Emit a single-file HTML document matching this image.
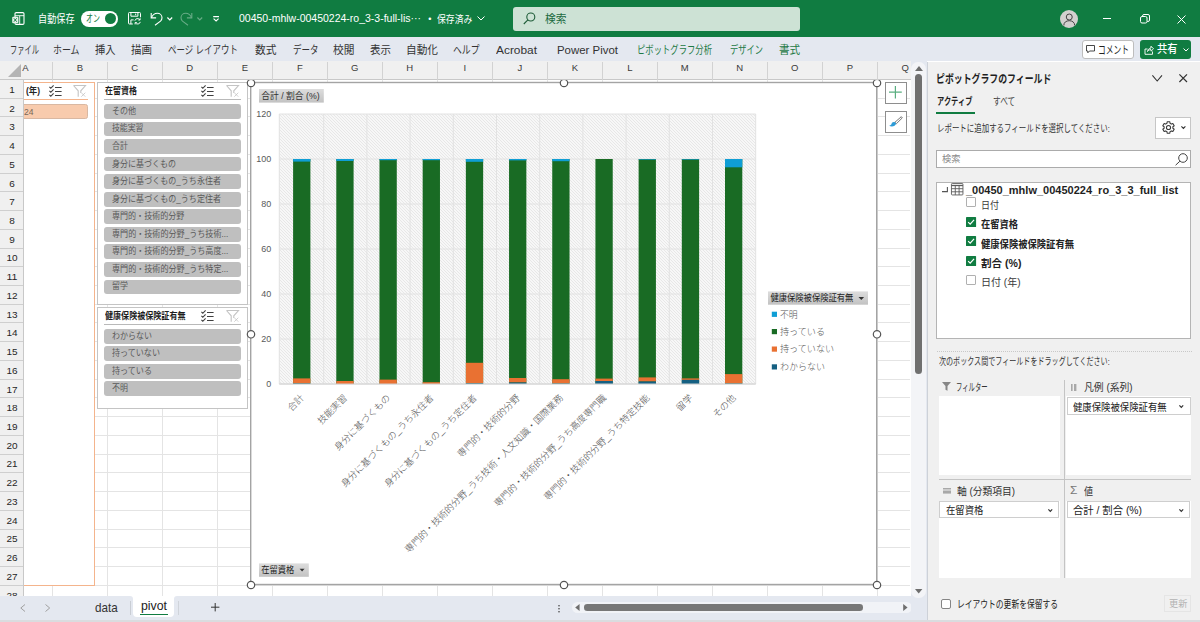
<!DOCTYPE html><html lang="ja"><head><meta charset="utf-8"><title>00450-mhlw-00450224-ro_3-3-full-list - Excel</title><style>
*{box-sizing:border-box;margin:0;padding:0}
html,body{width:1200px;height:622px;overflow:hidden;background:#fff}
body{font-family:"Liberation Sans", "Noto Sans CJK JP", sans-serif;}
#app{position:relative;width:1200px;height:622px;overflow:hidden;background:#fff}
.t{position:absolute;white-space:nowrap;display:inline-block}
.abs{position:absolute}
svg{position:absolute;overflow:visible}
</style></head><body><div id="app"><div class="abs" style="left:51.5px;top:80px;width:1px;height:516px;background:#e4e4e4"></div><div class="abs" style="left:106.5px;top:80px;width:1px;height:516px;background:#e4e4e4"></div><div class="abs" style="left:161.5px;top:80px;width:1px;height:516px;background:#e4e4e4"></div><div class="abs" style="left:216.5px;top:80px;width:1px;height:516px;background:#e4e4e4"></div><div class="abs" style="left:271.5px;top:80px;width:1px;height:516px;background:#e4e4e4"></div><div class="abs" style="left:326.5px;top:80px;width:1px;height:516px;background:#e4e4e4"></div><div class="abs" style="left:381.5px;top:80px;width:1px;height:516px;background:#e4e4e4"></div><div class="abs" style="left:436.5px;top:80px;width:1px;height:516px;background:#e4e4e4"></div><div class="abs" style="left:491.5px;top:80px;width:1px;height:516px;background:#e4e4e4"></div><div class="abs" style="left:546.5px;top:80px;width:1px;height:516px;background:#e4e4e4"></div><div class="abs" style="left:601.5px;top:80px;width:1px;height:516px;background:#e4e4e4"></div><div class="abs" style="left:656.5px;top:80px;width:1px;height:516px;background:#e4e4e4"></div><div class="abs" style="left:711.5px;top:80px;width:1px;height:516px;background:#e4e4e4"></div><div class="abs" style="left:766.5px;top:80px;width:1px;height:516px;background:#e4e4e4"></div><div class="abs" style="left:821.5px;top:80px;width:1px;height:516px;background:#e4e4e4"></div><div class="abs" style="left:876.5px;top:80px;width:1px;height:516px;background:#e4e4e4"></div><div class="abs" style="left:24px;top:97.73px;width:886px;height:1px;background:#e4e4e4"></div><div class="abs" style="left:24px;top:116.46px;width:886px;height:1px;background:#e4e4e4"></div><div class="abs" style="left:24px;top:135.19px;width:886px;height:1px;background:#e4e4e4"></div><div class="abs" style="left:24px;top:153.92px;width:886px;height:1px;background:#e4e4e4"></div><div class="abs" style="left:24px;top:172.65px;width:886px;height:1px;background:#e4e4e4"></div><div class="abs" style="left:24px;top:191.38px;width:886px;height:1px;background:#e4e4e4"></div><div class="abs" style="left:24px;top:210.11px;width:886px;height:1px;background:#e4e4e4"></div><div class="abs" style="left:24px;top:228.84px;width:886px;height:1px;background:#e4e4e4"></div><div class="abs" style="left:24px;top:247.57px;width:886px;height:1px;background:#e4e4e4"></div><div class="abs" style="left:24px;top:266.30px;width:886px;height:1px;background:#e4e4e4"></div><div class="abs" style="left:24px;top:285.03px;width:886px;height:1px;background:#e4e4e4"></div><div class="abs" style="left:24px;top:303.76px;width:886px;height:1px;background:#e4e4e4"></div><div class="abs" style="left:24px;top:322.49px;width:886px;height:1px;background:#e4e4e4"></div><div class="abs" style="left:24px;top:341.22px;width:886px;height:1px;background:#e4e4e4"></div><div class="abs" style="left:24px;top:359.95px;width:886px;height:1px;background:#e4e4e4"></div><div class="abs" style="left:24px;top:378.68px;width:886px;height:1px;background:#e4e4e4"></div><div class="abs" style="left:24px;top:397.41px;width:886px;height:1px;background:#e4e4e4"></div><div class="abs" style="left:24px;top:416.14px;width:886px;height:1px;background:#e4e4e4"></div><div class="abs" style="left:24px;top:434.87px;width:886px;height:1px;background:#e4e4e4"></div><div class="abs" style="left:24px;top:453.60px;width:886px;height:1px;background:#e4e4e4"></div><div class="abs" style="left:24px;top:472.33px;width:886px;height:1px;background:#e4e4e4"></div><div class="abs" style="left:24px;top:491.06px;width:886px;height:1px;background:#e4e4e4"></div><div class="abs" style="left:24px;top:509.79px;width:886px;height:1px;background:#e4e4e4"></div><div class="abs" style="left:24px;top:528.52px;width:886px;height:1px;background:#e4e4e4"></div><div class="abs" style="left:24px;top:547.25px;width:886px;height:1px;background:#e4e4e4"></div><div class="abs" style="left:24px;top:565.98px;width:886px;height:1px;background:#e4e4e4"></div><div class="abs" style="left:24px;top:584.71px;width:886px;height:1px;background:#e4e4e4"></div><div class="abs" style="left:-20px;top:82px;width:115px;height:503.500px;background:#fff;border:1px solid #f4b48c"></div><span class="t" style="left:26px;top:83.80px;font-size:9.5px;line-height:14px;color:#262626;font-weight:700;transform:scaleX(0.8845);transform-origin:left center;">(年)</span><svg style="left:48.5px;top:85px" width="13" height="12" viewBox="0 0 13 12" fill="none" stroke="#404040" stroke-width="1.1"><path d="M0.400 1.900L1.800 3.300L4.600 0.300M0.400 5.900L1.800 7.300L4.600 4.300M0.400 9.900L1.800 11.300L4.600 8.300M6 2.500H12.600M6 6.500H12.600M6 10.500H12.600"/></svg><svg style="left:73px;top:85px" width="13" height="12.500" viewBox="0 0 13 12.500" fill="none" stroke="#c4c4c4" stroke-width="1.1"><path d="M0.500 0.500H12.500L7.800 5.800V8M5.200 11.800V5.800L0.500 0.500"/><path d="M8.300 7.700L12.300 11.700M12.300 7.700L8.300 11.700" stroke-width="0.8"/></svg><div class="abs" style="left:20px;top:99px;width:68px;height:1px;background:#f4b48c"></div><div class="abs" style="left:14px;top:104px;width:74px;height:14.800px;background:#f8cbad;border:1px solid #d9b8a2;border-radius:2.500px"></div><span class="t" style="left:24px;top:104.50px;font-size:9px;line-height:14px;color:#7a6858;transform:scaleX(0.9485);transform-origin:left center;">24</span><div class="abs" style="left:97px;top:82px;width:151px;height:222.500px;background:#fff;border:1px solid #c4c4c4"></div><span class="t" style="left:104.5px;top:83.80px;font-size:9.5px;line-height:14px;color:#1e1e1e;font-weight:700;transform:scaleX(0.8418);transform-origin:left center;">在留資格</span><svg style="left:201px;top:85px" width="13" height="12" viewBox="0 0 13 12" fill="none" stroke="#404040" stroke-width="1.1"><path d="M0.400 1.900L1.800 3.300L4.600 0.300M0.400 5.900L1.800 7.300L4.600 4.300M0.400 9.900L1.800 11.300L4.600 8.300M6 2.500H12.600M6 6.500H12.600M6 10.500H12.600"/></svg><svg style="left:225.5px;top:85px" width="13" height="12.500" viewBox="0 0 13 12.500" fill="none" stroke="#c4c4c4" stroke-width="1.1"><path d="M0.500 0.500H12.500L7.800 5.800V8M5.200 11.800V5.800L0.500 0.500"/><path d="M8.300 7.700L12.300 11.700M12.300 7.700L8.300 11.700" stroke-width="0.8"/></svg><div class="abs" style="left:104px;top:98.600px;width:137px;height:1px;background:#b9b9b9"></div><div class="abs" style="left:104px;top:104.00px;width:137px;height:14.800px;background:#bfbfbf;border-radius:3px"></div><span class="t" style="left:111.7px;top:104.90px;font-size:8.6px;line-height:13px;color:#595959;transform:scaleX(0.9381);transform-origin:left center;">その他</span><div class="abs" style="left:104px;top:121.55px;width:137px;height:14.800px;background:#bfbfbf;border-radius:3px"></div><span class="t" style="left:111.7px;top:122.45px;font-size:8.6px;line-height:13px;color:#595959;transform:scaleX(0.9159);transform-origin:left center;">技能実習</span><div class="abs" style="left:104px;top:139.10px;width:137px;height:14.800px;background:#bfbfbf;border-radius:3px"></div><span class="t" style="left:111.7px;top:140.00px;font-size:8.6px;line-height:13px;color:#595959;transform:scaleX(0.9243);transform-origin:left center;">合計</span><div class="abs" style="left:104px;top:156.65px;width:137px;height:14.800px;background:#bfbfbf;border-radius:3px"></div><span class="t" style="left:111.7px;top:157.55px;font-size:8.6px;line-height:13px;color:#595959;transform:scaleX(0.9307);transform-origin:left center;">身分に基づくもの</span><div class="abs" style="left:104px;top:174.20px;width:137px;height:14.800px;background:#bfbfbf;border-radius:3px"></div><span class="t" style="left:111.7px;top:175.10px;font-size:8.6px;line-height:13px;color:#595959;transform:scaleX(0.9356);transform-origin:left center;">身分に基づくもの_うち永住者</span><div class="abs" style="left:104px;top:191.75px;width:137px;height:14.800px;background:#bfbfbf;border-radius:3px"></div><span class="t" style="left:111.7px;top:192.65px;font-size:8.6px;line-height:13px;color:#595959;transform:scaleX(0.9356);transform-origin:left center;">身分に基づくもの_うち定住者</span><div class="abs" style="left:104px;top:209.30px;width:137px;height:14.800px;background:#bfbfbf;border-radius:3px"></div><span class="t" style="left:111.7px;top:210.20px;font-size:8.6px;line-height:13px;color:#595959;transform:scaleX(0.9346);transform-origin:left center;">専門的・技術的分野</span><div class="abs" style="left:104px;top:226.85px;width:137px;height:14.800px;background:#bfbfbf;border-radius:3px"></div><span class="t" style="left:111.7px;top:227.75px;font-size:8.6px;line-height:13px;color:#595959;transform:scaleX(0.9396);transform-origin:left center;">専門的・技術的分野_うち技術...</span><div class="abs" style="left:104px;top:244.40px;width:137px;height:14.800px;background:#bfbfbf;border-radius:3px"></div><span class="t" style="left:111.7px;top:245.30px;font-size:8.6px;line-height:13px;color:#595959;transform:scaleX(0.9396);transform-origin:left center;">専門的・技術的分野_うち高度...</span><div class="abs" style="left:104px;top:261.95px;width:137px;height:14.800px;background:#bfbfbf;border-radius:3px"></div><span class="t" style="left:111.7px;top:262.85px;font-size:8.6px;line-height:13px;color:#595959;transform:scaleX(0.9396);transform-origin:left center;">専門的・技術的分野_うち特定...</span><div class="abs" style="left:104px;top:279.50px;width:137px;height:14.800px;background:#bfbfbf;border-radius:3px"></div><span class="t" style="left:111.7px;top:280.40px;font-size:8.6px;line-height:13px;color:#595959;transform:scaleX(0.9243);transform-origin:left center;">留学</span><div class="abs" style="left:97px;top:307px;width:151px;height:102px;background:#fff;border:1px solid #c4c4c4"></div><span class="t" style="left:104.5px;top:308.50px;font-size:9.5px;line-height:14px;color:#1e1e1e;font-weight:700;transform:scaleX(0.8472);transform-origin:left center;">健康保険被保険証有無</span><svg style="left:201px;top:309.7px" width="13" height="12" viewBox="0 0 13 12" fill="none" stroke="#404040" stroke-width="1.1"><path d="M0.400 1.900L1.800 3.300L4.600 0.300M0.400 5.900L1.800 7.300L4.600 4.300M0.400 9.900L1.800 11.300L4.600 8.300M6 2.500H12.600M6 6.500H12.600M6 10.500H12.600"/></svg><svg style="left:225.5px;top:309.7px" width="13" height="12.500" viewBox="0 0 13 12.500" fill="none" stroke="#c4c4c4" stroke-width="1.1"><path d="M0.500 0.500H12.500L7.800 5.800V8M5.200 11.800V5.800L0.500 0.500"/><path d="M8.300 7.700L12.300 11.700M12.300 7.700L8.300 11.700" stroke-width="0.8"/></svg><div class="abs" style="left:104px;top:323.500px;width:137px;height:1px;background:#b9b9b9"></div><div class="abs" style="left:104px;top:329.00px;width:137px;height:14.800px;background:#bfbfbf;border-radius:3px"></div><span class="t" style="left:111.7px;top:329.90px;font-size:8.6px;line-height:13px;color:#595959;transform:scaleX(0.9306);transform-origin:left center;">わからない</span><div class="abs" style="left:104px;top:346.45px;width:137px;height:14.800px;background:#bfbfbf;border-radius:3px"></div><span class="t" style="left:111.7px;top:347.35px;font-size:8.6px;line-height:13px;color:#595959;transform:scaleX(0.9386);transform-origin:left center;">持っていない</span><div class="abs" style="left:104px;top:363.90px;width:137px;height:14.800px;background:#bfbfbf;border-radius:3px"></div><span class="t" style="left:111.7px;top:364.80px;font-size:8.6px;line-height:13px;color:#595959;transform:scaleX(0.9401);transform-origin:left center;">持っている</span><div class="abs" style="left:104px;top:381.35px;width:137px;height:14.800px;background:#bfbfbf;border-radius:3px"></div><span class="t" style="left:111.7px;top:382.25px;font-size:8.6px;line-height:13px;color:#595959;transform:scaleX(0.9243);transform-origin:left center;">不明</span><svg style="left:0;top:0" width="1200" height="622" viewBox="0 0 1200 622"><defs><pattern id="hatch" width="3" height="3" patternUnits="userSpaceOnUse"><rect width="3" height="3" fill="#f7f7f7"/><path d="M0 0h1v1h-1zM1 1h1v1h-1zM2 2h1v1h-1z" fill="#e7e7e7"/></pattern><linearGradient id="btn" x1="0" y1="0" x2="0" y2="1"><stop offset="0" stop-color="#dddddd"/><stop offset="1" stop-color="#c2c2c2"/></linearGradient></defs><rect x="250.700" y="82.500" width="626" height="502" fill="#fff" stroke="#a4a4a4" stroke-width="1.400"/><rect x="279.3" y="114.0" width="476.4" height="270.0" fill="url(#hatch)"/><line x1="279.30" y1="114.0" x2="279.30" y2="384.0" stroke="#e2e2e2" stroke-width="1"/><line x1="323.70" y1="114.0" x2="323.70" y2="384.0" stroke="#e2e2e2" stroke-width="1"/><line x1="366.90" y1="114.0" x2="366.90" y2="384.0" stroke="#e2e2e2" stroke-width="1"/><line x1="410.10" y1="114.0" x2="410.10" y2="384.0" stroke="#e2e2e2" stroke-width="1"/><line x1="453.30" y1="114.0" x2="453.30" y2="384.0" stroke="#e2e2e2" stroke-width="1"/><line x1="496.50" y1="114.0" x2="496.50" y2="384.0" stroke="#e2e2e2" stroke-width="1"/><line x1="539.70" y1="114.0" x2="539.70" y2="384.0" stroke="#e2e2e2" stroke-width="1"/><line x1="582.90" y1="114.0" x2="582.90" y2="384.0" stroke="#e2e2e2" stroke-width="1"/><line x1="626.10" y1="114.0" x2="626.10" y2="384.0" stroke="#e2e2e2" stroke-width="1"/><line x1="669.30" y1="114.0" x2="669.30" y2="384.0" stroke="#e2e2e2" stroke-width="1"/><line x1="712.50" y1="114.0" x2="712.50" y2="384.0" stroke="#e2e2e2" stroke-width="1"/><line x1="755.70" y1="114.0" x2="755.70" y2="384.0" stroke="#e2e2e2" stroke-width="1"/><line x1="279.3" y1="384.00" x2="755.7" y2="384.00" stroke="#e2e2e2" stroke-width="1"/><text x="271.300" y="387.20" text-anchor="end" font-size="9" fill="#595959">0</text><line x1="279.3" y1="339.00" x2="755.7" y2="339.00" stroke="#e2e2e2" stroke-width="1"/><text x="271.300" y="342.20" text-anchor="end" font-size="9" fill="#595959">20</text><line x1="279.3" y1="294.00" x2="755.7" y2="294.00" stroke="#e2e2e2" stroke-width="1"/><text x="271.300" y="297.20" text-anchor="end" font-size="9" fill="#595959">40</text><line x1="279.3" y1="249.00" x2="755.7" y2="249.00" stroke="#e2e2e2" stroke-width="1"/><text x="271.300" y="252.20" text-anchor="end" font-size="9" fill="#595959">60</text><line x1="279.3" y1="204.00" x2="755.7" y2="204.00" stroke="#e2e2e2" stroke-width="1"/><text x="271.300" y="207.20" text-anchor="end" font-size="9" fill="#595959">80</text><line x1="279.3" y1="159.00" x2="755.7" y2="159.00" stroke="#e2e2e2" stroke-width="1"/><text x="271.300" y="162.20" text-anchor="end" font-size="9" fill="#595959">100</text><line x1="279.3" y1="114.00" x2="755.7" y2="114.00" stroke="#e2e2e2" stroke-width="1"/><text x="271.300" y="117.20" text-anchor="end" font-size="9" fill="#595959">120</text><rect x="293.10" y="159.00" width="17.3" height="225.00" fill="#196b24"/><rect x="293.10" y="159.00" width="17.3" height="2.6" fill="#0f9ed5"/><rect x="293.10" y="378.40" width="17.3" height="5.0" fill="#e97132"/><rect x="293.10" y="383.40" width="17.3" height="0.6" fill="#156082"/><rect x="336.29" y="159.00" width="17.3" height="225.00" fill="#196b24"/><rect x="336.29" y="159.00" width="17.3" height="2.0" fill="#0f9ed5"/><rect x="336.29" y="381.00" width="17.3" height="3.0" fill="#e97132"/><rect x="379.48" y="159.00" width="17.3" height="225.00" fill="#196b24"/><rect x="379.48" y="159.00" width="17.3" height="1.2" fill="#0f9ed5"/><rect x="379.48" y="379.60" width="17.3" height="4.4" fill="#e97132"/><rect x="422.67" y="159.00" width="17.3" height="225.00" fill="#196b24"/><rect x="422.67" y="159.00" width="17.3" height="1.2" fill="#0f9ed5"/><rect x="422.67" y="382.20" width="17.3" height="1.8" fill="#e97132"/><rect x="465.86" y="159.00" width="17.3" height="225.00" fill="#196b24"/><rect x="465.86" y="159.00" width="17.3" height="2.8" fill="#0f9ed5"/><rect x="465.86" y="362.80" width="17.3" height="20.4" fill="#e97132"/><rect x="465.86" y="383.20" width="17.3" height="0.8" fill="#156082"/><rect x="509.05" y="159.00" width="17.3" height="225.00" fill="#196b24"/><rect x="509.05" y="159.00" width="17.3" height="1.4" fill="#0f9ed5"/><rect x="509.05" y="378.00" width="17.3" height="4.5" fill="#e97132"/><rect x="509.05" y="382.50" width="17.3" height="1.5" fill="#156082"/><rect x="552.24" y="159.00" width="17.3" height="225.00" fill="#196b24"/><rect x="552.24" y="159.00" width="17.3" height="2.2" fill="#0f9ed5"/><rect x="552.24" y="379.20" width="17.3" height="4.3" fill="#e97132"/><rect x="552.24" y="383.50" width="17.3" height="0.5" fill="#156082"/><rect x="595.43" y="159.00" width="17.3" height="225.00" fill="#196b24"/><rect x="595.43" y="378.60" width="17.3" height="2.4" fill="#e97132"/><rect x="595.43" y="381.00" width="17.3" height="3.0" fill="#156082"/><rect x="638.62" y="159.00" width="17.3" height="225.00" fill="#196b24"/><rect x="638.62" y="159.00" width="17.3" height="0.6" fill="#0f9ed5"/><rect x="638.62" y="377.40" width="17.3" height="4.1" fill="#e97132"/><rect x="638.62" y="381.50" width="17.3" height="2.5" fill="#156082"/><rect x="681.81" y="159.00" width="17.3" height="225.00" fill="#196b24"/><rect x="681.81" y="159.00" width="17.3" height="0.6" fill="#0f9ed5"/><rect x="681.81" y="378.40" width="17.3" height="1.5" fill="#e97132"/><rect x="681.81" y="379.90" width="17.3" height="4.1" fill="#156082"/><rect x="725.00" y="159.00" width="17.3" height="225.00" fill="#196b24"/><rect x="725.00" y="159.00" width="17.3" height="8.3" fill="#0f9ed5"/><rect x="725.00" y="374.10" width="17.3" height="9.4" fill="#e97132"/><rect x="725.00" y="383.50" width="17.3" height="0.5" fill="#156082"/><line x1="279.3" y1="384.0" x2="755.7" y2="384.0" stroke="#d0d0d0" stroke-width="1"/><text transform="translate(304.55,398.5) rotate(-45)" text-anchor="end" font-size="9.300" font-weight="300" fill="#4d4d4d">合計</text><text transform="translate(347.74,398.5) rotate(-45)" text-anchor="end" font-size="9.300" font-weight="300" fill="#4d4d4d">技能実習</text><text transform="translate(390.93,398.5) rotate(-45)" text-anchor="end" font-size="9.300" font-weight="300" fill="#4d4d4d">身分に基づくもの</text><text transform="translate(434.12,398.5) rotate(-45)" text-anchor="end" font-size="9.300" font-weight="300" fill="#4d4d4d">身分に基づくもの_うち永住者</text><text transform="translate(477.31,398.5) rotate(-45)" text-anchor="end" font-size="9.300" font-weight="300" fill="#4d4d4d">身分に基づくもの_うち定住者</text><text transform="translate(520.50,398.5) rotate(-45)" text-anchor="end" font-size="9.300" font-weight="300" fill="#4d4d4d">専門的・技術的分野</text><text transform="translate(563.69,398.5) rotate(-45)" text-anchor="end" font-size="9.300" font-weight="300" fill="#4d4d4d">専門的・技術的分野_うち技術・人文知識・国際業務</text><text transform="translate(606.88,398.5) rotate(-45)" text-anchor="end" font-size="9.300" font-weight="300" fill="#4d4d4d">専門的・技術的分野_うち高度専門職</text><text transform="translate(650.07,398.5) rotate(-45)" text-anchor="end" font-size="9.300" font-weight="300" fill="#4d4d4d">専門的・技術的分野_うち特定技能</text><text transform="translate(693.26,398.5) rotate(-45)" text-anchor="end" font-size="9.300" font-weight="300" fill="#4d4d4d">留学</text><text transform="translate(736.45,398.5) rotate(-45)" text-anchor="end" font-size="9.300" font-weight="300" fill="#4d4d4d">その他</text><rect x="259" y="89" width="64.800" height="13.600" fill="url(#btn)"/><text x="261.200" y="99" font-size="9.300" fill="#333" textLength="58.500" lengthAdjust="spacingAndGlyphs">合計 / 割合 (%)</text><rect x="259" y="563.400" width="49.800" height="13.400" fill="url(#btn)"/><text x="261.200" y="573.300" font-size="9.300" fill="#222" textLength="33" lengthAdjust="spacingAndGlyphs">在留資格</text><path d="M299.600 568.700h5l-2.500 2.800z" fill="#333"/><rect x="768" y="291.400" width="100" height="13.300" fill="url(#btn)"/><text x="770.400" y="301.300" font-size="9.300" fill="#222" textLength="83" lengthAdjust="spacingAndGlyphs">健康保険被保険証有無</text><path d="M858.500 297h5.600l-2.800 3z" fill="#333"/><rect x="771.800" y="311.70" width="5.200" height="5.200" fill="#0f9ed5"/><text x="780" y="317.60" font-size="9.300" font-weight="300" fill="#555" textLength="17.7" lengthAdjust="spacingAndGlyphs">不明</text><rect x="771.800" y="329.00" width="5.200" height="5.200" fill="#196b24"/><text x="780" y="334.90" font-size="9.300" font-weight="300" fill="#555" textLength="45.0" lengthAdjust="spacingAndGlyphs">持っている</text><rect x="771.800" y="346.50" width="5.200" height="5.200" fill="#e97132"/><text x="780" y="352.40" font-size="9.300" font-weight="300" fill="#555" textLength="54.1" lengthAdjust="spacingAndGlyphs">持っていない</text><rect x="771.800" y="364.30" width="5.200" height="5.200" fill="#156082"/><text x="780" y="370.20" font-size="9.300" font-weight="300" fill="#555" textLength="45.0" lengthAdjust="spacingAndGlyphs">わからない</text><circle cx="251" cy="83" r="3.700" fill="#fff" stroke="#555" stroke-width="1.200"/><circle cx="564" cy="83" r="3.700" fill="#fff" stroke="#555" stroke-width="1.200"/><circle cx="877" cy="83" r="3.700" fill="#fff" stroke="#555" stroke-width="1.200"/><circle cx="251" cy="334.3" r="3.700" fill="#fff" stroke="#555" stroke-width="1.200"/><circle cx="877" cy="334.3" r="3.700" fill="#fff" stroke="#555" stroke-width="1.200"/><circle cx="251" cy="585" r="3.700" fill="#fff" stroke="#555" stroke-width="1.200"/><circle cx="564" cy="585" r="3.700" fill="#fff" stroke="#555" stroke-width="1.200"/><circle cx="877" cy="585" r="3.700" fill="#fff" stroke="#555" stroke-width="1.200"/><rect x="885.500" y="82.500" width="21" height="21" fill="#fff" stroke="#8e8e8e" stroke-width="1"/><path d="M895.400 85.900V98.500M889 92.200H901.800" stroke="#5aae80" stroke-width="1.200"/><rect x="885.500" y="111.500" width="21" height="21" fill="#fff" stroke="#8e8e8e" stroke-width="1"/><path d="M901.300 116.700L902.300 117.900L896.400 123.700L894.800 122.400Z" fill="#fff" stroke="#555" stroke-width="0.800"/><path d="M894.600 122.100c-1.700-0.400-2.700 0.500-3 1.700c-0.300 1-1.200 1.700-2.500 1.900c2.300 1.300 6.300 0.900 7.100-2.200Z" fill="#2e9bd6"/></svg><div class="abs" style="left:0;top:61px;width:910.500px;height:18.500px;background:#f0f0f0;border-bottom:1px solid #c8c8c8"></div><svg style="left:7.700px;top:64.300px" width="13" height="13" viewBox="0 0 13 13"><path d="M13 0V13H0Z" fill="#b4b4b4"/></svg><div class="abs" style="left:0;top:79.500px;width:23.500px;height:516.500px;background:#f0f0f0;border-right:1px solid #c8c8c8;overflow:hidden"></div><span class="t" style="left:22.3px;top:60.90px;font-size:9.5px;line-height:14px;color:#3a3a3a;">A</span><span class="t" style="left:79.8px;top:60.90px;font-size:9.5px;line-height:14px;color:#3a3a3a;transform:translateX(-50%) scaleX(1.0000);transform-origin:center center;">B</span><div class="abs" style="left:51.5px;top:62px;width:1px;height:17.500px;background:#d2d2d2"></div><span class="t" style="left:134.8px;top:60.90px;font-size:9.5px;line-height:14px;color:#3a3a3a;transform:translateX(-50%) scaleX(1.0000);transform-origin:center center;">C</span><div class="abs" style="left:106.5px;top:62px;width:1px;height:17.500px;background:#d2d2d2"></div><span class="t" style="left:189.8px;top:60.90px;font-size:9.5px;line-height:14px;color:#3a3a3a;transform:translateX(-50%) scaleX(1.0000);transform-origin:center center;">D</span><div class="abs" style="left:161.5px;top:62px;width:1px;height:17.500px;background:#d2d2d2"></div><span class="t" style="left:244.8px;top:60.90px;font-size:9.5px;line-height:14px;color:#3a3a3a;transform:translateX(-50%) scaleX(1.0000);transform-origin:center center;">E</span><div class="abs" style="left:216.5px;top:62px;width:1px;height:17.500px;background:#d2d2d2"></div><span class="t" style="left:299.8px;top:60.90px;font-size:9.5px;line-height:14px;color:#3a3a3a;transform:translateX(-50%) scaleX(1.0000);transform-origin:center center;">F</span><div class="abs" style="left:271.5px;top:62px;width:1px;height:17.500px;background:#d2d2d2"></div><span class="t" style="left:354.8px;top:60.90px;font-size:9.5px;line-height:14px;color:#3a3a3a;transform:translateX(-50%) scaleX(1.0000);transform-origin:center center;">G</span><div class="abs" style="left:326.5px;top:62px;width:1px;height:17.500px;background:#d2d2d2"></div><span class="t" style="left:409.8px;top:60.90px;font-size:9.5px;line-height:14px;color:#3a3a3a;transform:translateX(-50%) scaleX(1.0000);transform-origin:center center;">H</span><div class="abs" style="left:381.5px;top:62px;width:1px;height:17.500px;background:#d2d2d2"></div><span class="t" style="left:464.8px;top:60.90px;font-size:9.5px;line-height:14px;color:#3a3a3a;transform:translateX(-50%) scaleX(1.0000);transform-origin:center center;">I</span><div class="abs" style="left:436.5px;top:62px;width:1px;height:17.500px;background:#d2d2d2"></div><span class="t" style="left:519.8px;top:60.90px;font-size:9.5px;line-height:14px;color:#3a3a3a;transform:translateX(-50%) scaleX(1.0000);transform-origin:center center;">J</span><div class="abs" style="left:491.5px;top:62px;width:1px;height:17.500px;background:#d2d2d2"></div><span class="t" style="left:574.8px;top:60.90px;font-size:9.5px;line-height:14px;color:#3a3a3a;transform:translateX(-50%) scaleX(1.0000);transform-origin:center center;">K</span><div class="abs" style="left:546.5px;top:62px;width:1px;height:17.500px;background:#d2d2d2"></div><span class="t" style="left:629.8px;top:60.90px;font-size:9.5px;line-height:14px;color:#3a3a3a;transform:translateX(-50%) scaleX(1.0000);transform-origin:center center;">L</span><div class="abs" style="left:601.5px;top:62px;width:1px;height:17.500px;background:#d2d2d2"></div><span class="t" style="left:684.8px;top:60.90px;font-size:9.5px;line-height:14px;color:#3a3a3a;transform:translateX(-50%) scaleX(1.0000);transform-origin:center center;">M</span><div class="abs" style="left:656.5px;top:62px;width:1px;height:17.500px;background:#d2d2d2"></div><span class="t" style="left:739.8px;top:60.90px;font-size:9.5px;line-height:14px;color:#3a3a3a;transform:translateX(-50%) scaleX(1.0000);transform-origin:center center;">N</span><div class="abs" style="left:711.5px;top:62px;width:1px;height:17.500px;background:#d2d2d2"></div><span class="t" style="left:794.8px;top:60.90px;font-size:9.5px;line-height:14px;color:#3a3a3a;transform:translateX(-50%) scaleX(1.0000);transform-origin:center center;">O</span><div class="abs" style="left:766.5px;top:62px;width:1px;height:17.500px;background:#d2d2d2"></div><span class="t" style="left:849.8px;top:60.90px;font-size:9.5px;line-height:14px;color:#3a3a3a;transform:translateX(-50%) scaleX(1.0000);transform-origin:center center;">P</span><div class="abs" style="left:821.5px;top:62px;width:1px;height:17.500px;background:#d2d2d2"></div><span class="t" style="left:901.5px;top:60.90px;font-size:9.5px;line-height:14px;color:#3a3a3a;">Q</span><div class="abs" style="left:876.5px;top:62px;width:1px;height:17.500px;background:#d2d2d2"></div><div class="abs" style="left:0;top:79.500px;width:23px;height:516.500px;overflow:hidden"><div class="abs" style="left:0px;top:18.23px;width:23px;height:1px;background:#cfcfcf"></div><span class="t" style="left:11.6px;top:3.37px;font-size:9.2px;line-height:14px;color:#262626;transform:translateX(-50%) scaleX(1.0829);transform-origin:center center;">1</span><div class="abs" style="left:0px;top:36.96px;width:23px;height:1px;background:#cfcfcf"></div><span class="t" style="left:11.6px;top:22.09px;font-size:9.2px;line-height:14px;color:#262626;transform:translateX(-50%) scaleX(1.0829);transform-origin:center center;">2</span><div class="abs" style="left:0px;top:55.69px;width:23px;height:1px;background:#cfcfcf"></div><span class="t" style="left:11.6px;top:40.83px;font-size:9.2px;line-height:14px;color:#262626;transform:translateX(-50%) scaleX(1.0829);transform-origin:center center;">3</span><div class="abs" style="left:0px;top:74.42px;width:23px;height:1px;background:#cfcfcf"></div><span class="t" style="left:11.6px;top:59.56px;font-size:9.2px;line-height:14px;color:#262626;transform:translateX(-50%) scaleX(1.0829);transform-origin:center center;">4</span><div class="abs" style="left:0px;top:93.15px;width:23px;height:1px;background:#cfcfcf"></div><span class="t" style="left:11.6px;top:78.28px;font-size:9.2px;line-height:14px;color:#262626;transform:translateX(-50%) scaleX(1.0829);transform-origin:center center;">5</span><div class="abs" style="left:0px;top:111.88px;width:23px;height:1px;background:#cfcfcf"></div><span class="t" style="left:11.6px;top:97.02px;font-size:9.2px;line-height:14px;color:#262626;transform:translateX(-50%) scaleX(1.0829);transform-origin:center center;">6</span><div class="abs" style="left:0px;top:130.61px;width:23px;height:1px;background:#cfcfcf"></div><span class="t" style="left:11.6px;top:115.75px;font-size:9.2px;line-height:14px;color:#262626;transform:translateX(-50%) scaleX(1.0829);transform-origin:center center;">7</span><div class="abs" style="left:0px;top:149.34px;width:23px;height:1px;background:#cfcfcf"></div><span class="t" style="left:11.6px;top:134.47px;font-size:9.2px;line-height:14px;color:#262626;transform:translateX(-50%) scaleX(1.0829);transform-origin:center center;">8</span><div class="abs" style="left:0px;top:168.07px;width:23px;height:1px;background:#cfcfcf"></div><span class="t" style="left:11.6px;top:153.21px;font-size:9.2px;line-height:14px;color:#262626;transform:translateX(-50%) scaleX(1.0829);transform-origin:center center;">9</span><div class="abs" style="left:0px;top:186.80px;width:23px;height:1px;background:#cfcfcf"></div><span class="t" style="left:11.6px;top:171.94px;font-size:9.2px;line-height:14px;color:#262626;transform:translateX(-50%) scaleX(1.0846);transform-origin:center center;">10</span><div class="abs" style="left:0px;top:205.53px;width:23px;height:1px;background:#cfcfcf"></div><span class="t" style="left:11.6px;top:190.66px;font-size:9.2px;line-height:14px;color:#262626;transform:translateX(-50%) scaleX(1.1627);transform-origin:center center;">11</span><div class="abs" style="left:0px;top:224.26px;width:23px;height:1px;background:#cfcfcf"></div><span class="t" style="left:11.6px;top:209.40px;font-size:9.2px;line-height:14px;color:#262626;transform:translateX(-50%) scaleX(1.0846);transform-origin:center center;">12</span><div class="abs" style="left:0px;top:242.99px;width:23px;height:1px;background:#cfcfcf"></div><span class="t" style="left:11.6px;top:228.12px;font-size:9.2px;line-height:14px;color:#262626;transform:translateX(-50%) scaleX(1.0846);transform-origin:center center;">13</span><div class="abs" style="left:0px;top:261.72px;width:23px;height:1px;background:#cfcfcf"></div><span class="t" style="left:11.6px;top:246.86px;font-size:9.2px;line-height:14px;color:#262626;transform:translateX(-50%) scaleX(1.0846);transform-origin:center center;">14</span><div class="abs" style="left:0px;top:280.45px;width:23px;height:1px;background:#cfcfcf"></div><span class="t" style="left:11.6px;top:265.58px;font-size:9.2px;line-height:14px;color:#262626;transform:translateX(-50%) scaleX(1.0846);transform-origin:center center;">15</span><div class="abs" style="left:0px;top:299.18px;width:23px;height:1px;background:#cfcfcf"></div><span class="t" style="left:11.6px;top:284.31px;font-size:9.2px;line-height:14px;color:#262626;transform:translateX(-50%) scaleX(1.0846);transform-origin:center center;">16</span><div class="abs" style="left:0px;top:317.91px;width:23px;height:1px;background:#cfcfcf"></div><span class="t" style="left:11.6px;top:303.05px;font-size:9.2px;line-height:14px;color:#262626;transform:translateX(-50%) scaleX(1.0846);transform-origin:center center;">17</span><div class="abs" style="left:0px;top:336.64px;width:23px;height:1px;background:#cfcfcf"></div><span class="t" style="left:11.6px;top:321.78px;font-size:9.2px;line-height:14px;color:#262626;transform:translateX(-50%) scaleX(1.0846);transform-origin:center center;">18</span><div class="abs" style="left:0px;top:355.37px;width:23px;height:1px;background:#cfcfcf"></div><span class="t" style="left:11.6px;top:340.50px;font-size:9.2px;line-height:14px;color:#262626;transform:translateX(-50%) scaleX(1.0846);transform-origin:center center;">19</span><div class="abs" style="left:0px;top:374.10px;width:23px;height:1px;background:#cfcfcf"></div><span class="t" style="left:11.6px;top:359.24px;font-size:9.2px;line-height:14px;color:#262626;transform:translateX(-50%) scaleX(1.0846);transform-origin:center center;">20</span><div class="abs" style="left:0px;top:392.83px;width:23px;height:1px;background:#cfcfcf"></div><span class="t" style="left:11.6px;top:377.97px;font-size:9.2px;line-height:14px;color:#262626;transform:translateX(-50%) scaleX(1.0846);transform-origin:center center;">21</span><div class="abs" style="left:0px;top:411.56px;width:23px;height:1px;background:#cfcfcf"></div><span class="t" style="left:11.6px;top:396.69px;font-size:9.2px;line-height:14px;color:#262626;transform:translateX(-50%) scaleX(1.0846);transform-origin:center center;">22</span><div class="abs" style="left:0px;top:430.29px;width:23px;height:1px;background:#cfcfcf"></div><span class="t" style="left:11.6px;top:415.43px;font-size:9.2px;line-height:14px;color:#262626;transform:translateX(-50%) scaleX(1.0846);transform-origin:center center;">23</span><div class="abs" style="left:0px;top:449.02px;width:23px;height:1px;background:#cfcfcf"></div><span class="t" style="left:11.6px;top:434.16px;font-size:9.2px;line-height:14px;color:#262626;transform:translateX(-50%) scaleX(1.0846);transform-origin:center center;">24</span><div class="abs" style="left:0px;top:467.75px;width:23px;height:1px;background:#cfcfcf"></div><span class="t" style="left:11.6px;top:452.88px;font-size:9.2px;line-height:14px;color:#262626;transform:translateX(-50%) scaleX(1.0846);transform-origin:center center;">25</span><div class="abs" style="left:0px;top:486.48px;width:23px;height:1px;background:#cfcfcf"></div><span class="t" style="left:11.6px;top:471.62px;font-size:9.2px;line-height:14px;color:#262626;transform:translateX(-50%) scaleX(1.0846);transform-origin:center center;">26</span><div class="abs" style="left:0px;top:505.21px;width:23px;height:1px;background:#cfcfcf"></div><span class="t" style="left:11.6px;top:490.35px;font-size:9.2px;line-height:14px;color:#262626;transform:translateX(-50%) scaleX(1.0846);transform-origin:center center;">27</span><div class="abs" style="left:0px;top:523.94px;width:23px;height:1px;background:#cfcfcf"></div><span class="t" style="left:11.6px;top:509.08px;font-size:9.2px;line-height:14px;color:#262626;transform:translateX(-50%) scaleX(1.0846);transform-origin:center center;">28</span></div><div class="abs" style="left:0;top:596px;width:927px;height:26px;background:#e4e8f0"></div><div class="abs" style="left:0;top:620px;width:1200px;height:2px;background:#dadcdf"></div><svg style="left:19.500px;top:603.500px" width="5.500" height="8" viewBox="0 0 5.500 8" fill="none" stroke="#a0a0a0" stroke-width="1"><path d="M5 0.500L0.800 4L5 7.500"/></svg><svg style="left:45px;top:603.500px" width="5.500" height="8" viewBox="0 0 5.500 8" fill="none" stroke="#a0a0a0" stroke-width="1"><path d="M0.500 0.500L4.700 4L0.500 7.500"/></svg><span class="t" style="left:95.3px;top:598.30px;font-size:13px;line-height:20px;color:#333;transform:scaleX(0.8968);transform-origin:left center;">data</span><div class="abs" style="left:129.700px;top:600.500px;width:1px;height:14px;background:#c9cdd4"></div><div class="abs" style="left:132.800px;top:596px;width:41.600px;height:21.300px;background:#fff;border-radius:0 0 4px 4px"></div><svg style="left:129.800px;top:596px" width="3" height="3" viewBox="0 0 3 3"><path d="M0 0H3V3A3 3 0 0 0 0 0Z" fill="#fff"/></svg><svg style="left:174.400px;top:596px" width="3" height="3" viewBox="0 0 3 3"><path d="M3 0H0V3A3 3 0 0 1 3 0Z" fill="#fff"/></svg><span class="t" style="left:140.8px;top:595.80px;font-size:13px;line-height:20px;color:#222;transform:scaleX(0.9465);transform-origin:left center;">pivot</span><div class="abs" style="left:139.800px;top:613.500px;width:28.200px;height:1.800px;background:#107c41"></div><div class="abs" style="left:177.500px;top:600.500px;width:1px;height:14px;background:#d0d4da"></div><svg style="left:211.300px;top:603.400px" width="8.400" height="8.400" viewBox="0 0 8.400 8.400" stroke="#333" stroke-width="1"><path d="M4.200 0V8.400M0 4.200H8.400"/></svg><svg style="left:558px;top:605px" width="2" height="8" viewBox="0 0 2 8" fill="#555"><rect x="0.300" y="0" width="1.400" height="1.400"/><rect x="0.300" y="3" width="1.400" height="1.400"/><rect x="0.300" y="6" width="1.400" height="1.400"/></svg><div class="abs" style="left:571.500px;top:601.700px;width:340px;height:11.600px;background:#f1f3f7;border-radius:5.800px"></div><svg style="left:575px;top:604.300px" width="4.800" height="7" viewBox="0 0 5 8"><path d="M5 0L0 4L5 8Z" fill="#6e6e6e"/></svg><div class="abs" style="left:584.300px;top:604.300px;width:279px;height:6.700px;background:#777;border-radius:3.300px"></div><svg style="left:903.300px;top:604.300px" width="4.800" height="7" viewBox="0 0 5 8"><path d="M0 0L5 4L0 8Z" fill="#6e6e6e"/></svg><div class="abs" style="left:910.500px;top:61px;width:16px;height:559px;background:#e4e8f0"></div><div class="abs" style="left:911.300px;top:61.500px;width:14.400px;height:536.500px;background:#f3f4f7;border-radius:7px"></div><svg style="left:914.500px;top:65.500px" width="8" height="5" viewBox="0 0 8 5"><path d="M0 5L4 0L8 5Z" fill="#6e6e6e"/></svg><div class="abs" style="left:915px;top:74px;width:7px;height:300px;background:#707070;border-radius:3.500px"></div><svg style="left:914.800px;top:588.500px" width="7.400" height="4.600" viewBox="0 0 8 5"><path d="M0 0L4 5L8 0Z" fill="#6e6e6e"/></svg><div class="abs" style="left:926.500px;top:61.500px;width:273.500px;height:558px;background:#f0f0f0;border-left:1px solid #cdd1d8"></div><span class="t" style="left:935.6px;top:70.10px;font-size:11.6px;line-height:17px;color:#1f1f1f;font-weight:700;transform:scaleX(0.7668);transform-origin:left center;">ピボットグラフのフィールド</span><svg style="left:1152px;top:74.9px" width="10.4" height="6.4" viewBox="0 0 10.4 6.4" fill="none" stroke="#333" stroke-width="1.1"><path d="M0.400 0.400L5.2 6.0L10.0 0.400"/></svg><svg style="left:1178.500px;top:73.800px" width="8.400" height="8.400" viewBox="0 0 8.400 8.400" fill="none" stroke="#333" stroke-width="1.200"><path d="M0.400 0.400L8 8M8 0.400L0.400 8"/></svg><span class="t" style="left:937.4px;top:93.70px;font-size:9.7px;line-height:15px;color:#1f1f1f;font-weight:700;transform:scaleX(0.7472);transform-origin:left center;">アクティブ</span><div class="abs" style="left:936.300px;top:112px;width:38.700px;height:2.200px;background:#107c41"></div><span class="t" style="left:992.7px;top:93.70px;font-size:9.7px;line-height:15px;color:#444;transform:scaleX(0.7964);transform-origin:left center;">すべて</span><span class="t" style="left:937px;top:121.00px;font-size:9.8px;line-height:15px;color:#333;transform:scaleX(0.7603);transform-origin:left center;">レポートに追加するフィールドを選択してください:</span><div class="abs" style="left:1155px;top:117px;width:36px;height:22px;background:#fff;border:1px solid #c6c6c6"></div><svg style="left:1162.200px;top:121.200px" width="13" height="13" viewBox="-6 -6 12 12" fill="none" stroke="#3a3a3a" stroke-width="1" stroke-linejoin="round"><circle r="1.900"/><path d="M-1.39 -3.86L-1.24 -5.36L1.24 -5.36L1.39 -3.86L2.64 -3.13L4.02 -3.75L5.26 -1.61L4.04 -0.72L4.04 0.72L5.26 1.61L4.02 3.75L2.64 3.13L1.39 3.86L1.24 5.36L-1.24 5.36L-1.39 3.86L-2.64 3.13L-4.02 3.75L-5.26 1.61L-4.04 0.72L-4.04 -0.72L-5.26 -1.61L-4.02 -3.75L-2.64 -3.13Z"/></svg><svg style="left:1180.7px;top:126.3px" width="4.8" height="2.9" viewBox="0 0 4.8 2.9" fill="none" stroke="#333" stroke-width="1.1"><path d="M0.400 0.400L2.4 2.5L4.3999999999999995 0.400"/></svg><div class="abs" style="left:936.300px;top:149.500px;width:254.500px;height:18.300px;background:#fff;border:1px solid #ababab"></div><span class="t" style="left:941.5px;top:151.70px;font-size:9.5px;line-height:14px;color:#8a8a8a;transform:scaleX(0.9729);transform-origin:left center;">検索</span><svg style="left:1175px;top:152.500px" width="13" height="12.500" viewBox="0 0 13 12.500" fill="none" stroke="#444" stroke-width="1"><circle cx="8" cy="5" r="4.300"/><path d="M4.900 8.200L0.600 12.200"/></svg><div class="abs" style="left:936.400px;top:182.200px;width:254.200px;height:157.300px;background:#fff;border:1px solid #b4b4b4"></div><svg style="left:941.800px;top:186.600px" width="6" height="5.200" viewBox="0 0 6 5.200" fill="none" stroke="#555" stroke-width="1.100"><path d="M0 4.600H5.400V0"/></svg><svg style="left:951.200px;top:183.100px" width="12.400" height="12.400" viewBox="0 0 12.400 12.400" fill="none" stroke="#5a5a5a" stroke-width="0.900"><rect x="0.450" y="0.450" width="11.500" height="11.500" rx="0.800"/><path d="M0.450 2.500H11.950" stroke-width="1.300"/><path d="M0.450 5.700H11.950M0.450 8.800H11.950M4.300 2.500V11.950M8.100 2.500V11.950"/></svg><span class="t" style="left:966px;top:182.30px;font-size:11px;line-height:16px;color:#1f1f1f;font-weight:700;">_00450_mhlw_00450224_ro_3_3_full_list</span><div class="abs" style="left:966.1px;top:197.4px;width:10.100px;height:10.100px;background:#fff;border:1px solid #b0b0b0;border-radius:1px"></div><span class="t" style="left:981px;top:197.30px;font-size:10.5px;line-height:16px;color:#3a3a3a;transform:scaleX(0.8571);transform-origin:left center;">日付</span><svg style="left:966.1px;top:217.1px" width="10.100" height="10.100" viewBox="0 0 9.400 9.400"><rect width="9.400" height="9.400" rx="0.600" fill="#107c41"/><path d="M2 4.800L3.900 6.700L7.500 2.700" fill="none" stroke="#fff" stroke-width="1.100"/></svg><span class="t" style="left:981px;top:216.10px;font-size:10.5px;line-height:16px;color:#222;font-weight:700;transform:scaleX(0.8810);transform-origin:left center;">在留資格</span><svg style="left:966.1px;top:236.4px" width="10.100" height="10.100" viewBox="0 0 9.400 9.400"><rect width="9.400" height="9.400" rx="0.600" fill="#107c41"/><path d="M2 4.800L3.900 6.700L7.500 2.700" fill="none" stroke="#fff" stroke-width="1.100"/></svg><span class="t" style="left:981px;top:235.80px;font-size:10.5px;line-height:16px;color:#222;font-weight:700;transform:scaleX(0.8857);transform-origin:left center;">健康保険被保険証有無</span><svg style="left:966.1px;top:256.0px" width="10.100" height="10.100" viewBox="0 0 9.400 9.400"><rect width="9.400" height="9.400" rx="0.600" fill="#107c41"/><path d="M2 4.800L3.900 6.700L7.500 2.700" fill="none" stroke="#fff" stroke-width="1.100"/></svg><span class="t" style="left:981px;top:254.90px;font-size:10.5px;line-height:16px;color:#222;font-weight:700;transform:scaleX(1.0062);transform-origin:left center;">割合 (%)</span><div class="abs" style="left:966.1px;top:275.0px;width:10.100px;height:10.100px;background:#fff;border:1px solid #b0b0b0;border-radius:1px"></div><span class="t" style="left:981px;top:274.30px;font-size:10.5px;line-height:16px;color:#3a3a3a;transform:scaleX(0.9560);transform-origin:left center;">日付 (年)</span><div class="abs" style="left:937px;top:350.500px;width:255px;height:0;border-top:1px dotted #c8c8c8"></div><span class="t" style="left:939.2px;top:353.70px;font-size:9.8px;line-height:15px;color:#333;transform:scaleX(0.7205);transform-origin:left center;">次のボックス間でフィールドをドラッグしてください:</span><svg style="left:941.700px;top:382.200px" width="9" height="8.700" viewBox="0 0 8 8.500" preserveAspectRatio="none"><path d="M0 0H8L4.900 3.800V8.500L3.100 7.600V3.800Z" fill="#868686"/></svg><span class="t" style="left:956.4px;top:379.30px;font-size:10.5px;line-height:16px;color:#333;transform:scaleX(0.6042);transform-origin:left center;">フィルター</span><div class="abs" style="left:939px;top:396px;width:121.200px;height:78.500px;background:#fff"></div><div class="abs" style="left:1063.700px;top:380px;width:1px;height:198px;background:#c4c4c4"></div><svg style="left:1071px;top:383.500px" width="6" height="7" viewBox="0 0 6 7" fill="#a8a8a8"><rect x="0" y="0" width="1.600" height="7"/><rect x="3" y="0" width="2.400" height="7"/></svg><span class="t" style="left:1084px;top:379.30px;font-size:10.5px;line-height:16px;color:#333;transform:scaleX(0.9360);transform-origin:left center;">凡例 (系列)</span><div class="abs" style="left:1066.400px;top:396px;width:125px;height:78.500px;background:#fff"></div><div class="abs" style="left:1067px;top:397.400px;width:123.800px;height:17.400px;background:#fff;border:1px solid #cecece"></div><span class="t" style="left:1073.3px;top:398.50px;font-size:10.5px;line-height:16px;color:#222;transform:scaleX(0.8914);transform-origin:left center;">健康保険被保険証有無</span><svg style="left:1179.4px;top:405px" width="4.6" height="2.8" viewBox="0 0 4.6 2.8" fill="none" stroke="#333" stroke-width="1.2"><path d="M0.400 0.400L2.3 2.4L4.199999999999999 0.400"/></svg><div class="abs" style="left:939px;top:478.800px;width:252.200px;height:1px;background:#c4c4c4"></div><svg style="left:942.600px;top:487.600px" width="8" height="5.600" viewBox="0 0 8 5.600" fill="#a8a8a8"><rect width="8" height="1.500"/><rect y="2.500" width="8" height="3.100"/></svg><span class="t" style="left:956.6px;top:483.30px;font-size:10.5px;line-height:16px;color:#333;transform:scaleX(0.9292);transform-origin:left center;">軸 (分類項目)</span><div class="abs" style="left:939px;top:500.600px;width:121.200px;height:77.400px;background:#fff"></div><div class="abs" style="left:939.400px;top:501.400px;width:119.800px;height:16.800px;background:#fff;border:1px solid #cecece"></div><span class="t" style="left:946px;top:502.30px;font-size:10.5px;line-height:16px;color:#222;transform:scaleX(0.8905);transform-origin:left center;">在留資格</span><svg style="left:1048.2px;top:508.8px" width="4.6" height="2.8" viewBox="0 0 4.6 2.8" fill="none" stroke="#333" stroke-width="1.2"><path d="M0.400 0.400L2.3 2.4L4.199999999999999 0.400"/></svg><span class="t" style="left:1070.2px;top:482.30px;font-size:11px;line-height:16px;color:#777;transform:scaleX(1.0862);transform-origin:left center;font-family:"Liberation Serif",serif;">Σ</span><span class="t" style="left:1084.4px;top:483.30px;font-size:10.5px;line-height:16px;color:#333;transform:scaleX(0.8571);transform-origin:left center;">値</span><div class="abs" style="left:1066px;top:500.600px;width:125.200px;height:77.400px;background:#fff"></div><div class="abs" style="left:1067.300px;top:501.400px;width:123.200px;height:16.800px;background:#fff;border:1px solid #cecece"></div><span class="t" style="left:1073.4px;top:502.30px;font-size:10.5px;line-height:16px;color:#222;transform:scaleX(0.9857);transform-origin:left center;">合計 / 割合 (%)</span><svg style="left:1179px;top:508.8px" width="4.6" height="2.8" viewBox="0 0 4.6 2.8" fill="none" stroke="#333" stroke-width="1.2"><path d="M0.400 0.400L2.3 2.4L4.199999999999999 0.400"/></svg><div class="abs" style="left:941.100px;top:598.800px;width:10.200px;height:10px;background:#fff;border:1px solid #858585;border-radius:2px"></div><span class="t" style="left:956.6px;top:596.00px;font-size:10.5px;line-height:16px;color:#222;transform:scaleX(0.7399);transform-origin:left center;">レイアウトの更新を保留する</span><div class="abs" style="left:1164.300px;top:594.700px;width:27px;height:17.800px;background:#f0f0f0;border:1px solid #e5e5e5"></div><span class="t" style="left:1168.7px;top:596.60px;font-size:9.5px;line-height:14px;color:#b2b2b2;transform:scaleX(0.9624);transform-origin:left center;">更新</span><div class="abs" style="left:0;top:0;width:1200px;height:37px;background:#107c41"><svg style="left:12.300px;top:12px" width="12.500" height="13" viewBox="0 0 12.500 13"><rect x="3" y="0.600" width="9" height="11.800" rx="1.200" fill="none" stroke="#fff" stroke-width="1.100"/><path d="M3 3.700H12M7.700 3.700V12.400" stroke="#fff" stroke-width="1" opacity=".9"/><rect x="0.200" y="4.700" width="6.200" height="6.600" rx="1" fill="#e6f2ea"/><path d="M1.900 6.300L4.700 9.700M4.700 6.300L1.900 9.700" stroke="#107c41" stroke-width="1"/></svg><span class="t" style="left:38.3px;top:11.00px;font-size:10.8px;line-height:16px;color:#fff;transform:scaleX(0.8452);transform-origin:left center;">自動保存</span><div class="abs" style="left:81px;top:10.5px;width:37px;height:16px;border-radius:8px;background:#fff"></div><div class="abs" style="left:104.5px;top:13px;width:11px;height:11px;border-radius:50%;background:#107c41"></div><span class="t" style="left:86px;top:11.00px;font-size:10px;line-height:15px;color:#107c41;transform:scaleX(0.7000);transform-origin:left center;">オン</span><svg style="left:127.800px;top:12.200px" width="13" height="12.600" viewBox="0 0 13 12.600" fill="none" stroke="#fff" stroke-width="1"><path d="M4.800 12H1.500a1 1 0 0 1-1-1V1.500a1 1 0 0 1 1-1H11.500a1 1 0 0 1 1 1V5.300"/><path d="M2.900 0.600V4.200H9.900V0.600M7.700 1.600V3.200M2.900 12V7.900H5.600"/><path d="M6.900 8.700a2.700 2.700 0 0 1 4.900-0.900M12.300 9.900a2.700 2.700 0 0 1-4.900 0.900M12.100 6.200V8H10.300M7.100 12.400V10.600H8.900" stroke-width="0.950"/></svg><svg style="left:150px;top:11.500px" width="14" height="14" viewBox="0 0 14 14" fill="none" stroke="#fff" stroke-width="1.100"><path d="M1.200 1V5.900H6.100"/><path d="M1.400 5.700C2.600 3 5 1.300 7.300 1.300C10 1.300 12 3.300 12 5.800C12 7.300 11.400 8.300 10.500 9.100L5 13.300"/></svg><svg style="left:167px;top:16.600px" width="5.600" height="3.600" viewBox="0 0 5.600 3.600" fill="none" stroke="#fff" stroke-width="1.200"><path d="M0.400 0.500L2.800 2.900L5.200 0.500"/></svg><svg style="left:179.300px;top:11.500px" width="14" height="14" viewBox="0 0 14 14" fill="none" stroke="#fff" stroke-width="1.100" opacity=".36"><path d="M12.800 1V5.900H7.900"/><path d="M12.600 5.700C11.400 3 9 1.300 6.700 1.300C4 1.300 2 3.300 2 5.800C2 7.300 2.600 8.300 3.500 9.100L9 13.300"/></svg><svg style="left:196.800px;top:16.600px" width="5.600" height="3.600" viewBox="0 0 5.600 3.600" fill="none" stroke="#fff" stroke-width="1.200" opacity=".36"><path d="M0.400 0.500L2.800 2.900L5.200 0.500"/></svg><svg style="left:213px;top:16.300px" width="6.200" height="5.600" viewBox="0 0 6.200 5.600" fill="none" stroke="#fff" stroke-width="1.100"><path d="M0.200 0.600H6M0.600 2.600L3.100 5L5.600 2.600"/></svg><span class="t" style="left:238.5px;top:10.00px;font-size:11.5px;line-height:17px;color:#fff;transform:scaleX(0.9126);transform-origin:left center;">00450-mhlw-00450224-ro_3-3-full-lis···</span><span class="t" style="left:428.3px;top:11.50px;font-size:9px;line-height:14px;color:#fff;">•</span><span class="t" style="left:437px;top:10.50px;font-size:10.5px;line-height:16px;color:#fff;transform:scaleX(0.8405);transform-origin:left center;">保存済み</span><svg style="left:477px;top:16px" width="8" height="5" viewBox="0 0 8 5" fill="none" stroke="#fff" stroke-width="1"><path d="M0.500 0.500L4 4L7.500 0.500"/></svg><div class="abs" style="left:513.300px;top:6.500px;width:287.200px;height:24.200px;border-radius:3px;background:#cde2d5"></div><svg style="left:523px;top:12px" width="13" height="13" viewBox="0 0 13 13" fill="none" stroke="#1e5c38" stroke-width="1.100"><circle cx="7.800" cy="5" r="4"/><path d="M4.900 7.900L0.800 12"/></svg><span class="t" style="left:545.3px;top:10.60px;font-size:11px;line-height:16px;color:#1b6a3f;transform:scaleX(0.9773);transform-origin:left center;">検索</span><div class="abs" style="left:1059.500px;top:9.500px;width:18.500px;height:18.500px;border-radius:50%;background:#d2d0ce"></div><svg style="left:1059.500px;top:9.500px" width="18.500" height="18.500" viewBox="0 0 18.500 18.500" fill="none" stroke="#444" stroke-width="1"><circle cx="9.250" cy="7" r="3"/><path d="M3.800 15.500c0-3.200 2.400-4.800 5.450-4.800s5.450 1.600 5.450 4.800"/></svg><div class="abs" style="left:1102.500px;top:17.800px;width:8px;height:1px;background:#fff"></div><svg style="left:1139.500px;top:14px" width="10" height="10" viewBox="0 0 10 10" fill="none" stroke="#fff" stroke-width="1"><rect x="0.500" y="2.500" width="6.500" height="6.500" rx="1.500"/><path d="M2.500 2.300V2a1.500 1.500 0 0 1 1.500-1.500H8A1.500 1.500 0 0 1 9.500 2V6a1.500 1.500 0 0 1-1.500 1.500H7.200"/></svg><svg style="left:1177px;top:14.500px" width="9" height="9" viewBox="0 0 9 9" fill="none" stroke="#fff" stroke-width="1"><path d="M0.500 0.500L8.500 8.500M8.500 0.500L0.500 8.500"/></svg></div><div class="abs" style="left:0;top:37px;width:1200px;height:24px;background:#e4e8f0"></div><span class="t" style="left:9.5px;top:42.20px;font-size:11.3px;line-height:17px;color:#333;transform:scaleX(0.6415);transform-origin:left center;">ファイル</span><span class="t" style="left:53px;top:42.20px;font-size:11.3px;line-height:17px;color:#333;transform:scaleX(0.7896);transform-origin:left center;">ホーム</span><span class="t" style="left:94.5px;top:42.20px;font-size:11.3px;line-height:17px;color:#333;transform:scaleX(0.9067);transform-origin:left center;">挿入</span><span class="t" style="left:131px;top:42.20px;font-size:11.3px;line-height:17px;color:#333;transform:scaleX(0.9288);transform-origin:left center;">描画</span><span class="t" style="left:168px;top:42.20px;font-size:11.3px;line-height:17px;color:#333;transform:scaleX(0.7503);transform-origin:left center;">ページ レイアウト</span><span class="t" style="left:255px;top:42.20px;font-size:11.3px;line-height:17px;color:#333;transform:scaleX(0.9509);transform-origin:left center;">数式</span><span class="t" style="left:292.5px;top:42.20px;font-size:11.3px;line-height:17px;color:#333;transform:scaleX(0.7521);transform-origin:left center;">データ</span><span class="t" style="left:333px;top:42.20px;font-size:11.3px;line-height:17px;color:#333;transform:scaleX(0.9509);transform-origin:left center;">校閲</span><span class="t" style="left:369.5px;top:42.20px;font-size:11.3px;line-height:17px;color:#333;transform:scaleX(0.9288);transform-origin:left center;">表示</span><span class="t" style="left:405.5px;top:42.20px;font-size:11.3px;line-height:17px;color:#333;transform:scaleX(0.9438);transform-origin:left center;">自動化</span><span class="t" style="left:452.5px;top:42.20px;font-size:11.3px;line-height:17px;color:#333;transform:scaleX(0.7816);transform-origin:left center;">ヘルプ</span><span class="t" style="left:496px;top:42.20px;font-size:11.3px;line-height:17px;color:#333;transform:scaleX(1.0530);transform-origin:left center;">Acrobat</span><span class="t" style="left:557px;top:42.20px;font-size:11.3px;line-height:17px;color:#333;transform:scaleX(1.0119);transform-origin:left center;">Power Pivot</span><span class="t" style="left:637px;top:42.20px;font-size:11.3px;line-height:17px;color:#1e7a45;transform:scaleX(0.7376);transform-origin:left center;">ピボットグラフ分析</span><span class="t" style="left:729.5px;top:42.20px;font-size:11.3px;line-height:17px;color:#1e7a45;transform:scaleX(0.7300);transform-origin:left center;">デザイン</span><span class="t" style="left:778.8px;top:42.20px;font-size:11.3px;line-height:17px;color:#1e7a45;transform:scaleX(0.9377);transform-origin:left center;">書式</span><div class="abs" style="left:1081.500px;top:40.200px;width:52px;height:18.400px;border:1px solid #bdbdbd;border-radius:3px;background:#fff"></div><svg style="left:1085.500px;top:45px" width="9" height="9" viewBox="0 0 9 9" fill="none" stroke="#333" stroke-width="0.900"><path d="M0.500 0.500H8.500V6H3.500L1.800 7.800V6H0.500Z"/></svg><span class="t" style="left:1097.5px;top:41.50px;font-size:11px;line-height:16px;color:#222;transform:scaleX(0.7045);transform-origin:left center;">コメント</span><div class="abs" style="left:1140px;top:40.200px;width:51px;height:18.400px;border-radius:3px;background:#107c41"></div><svg style="left:1144px;top:44.500px" width="10" height="10" viewBox="0 0 10 10" fill="none" stroke="#fff" stroke-width="0.900"><path d="M3.500 4H1V9.300H8.500V6.500"/><path d="M3.500 6.500c0.300-2 1.500-3.200 3.500-3.500V1.200L9.500 3.800L7 6.200V4.600c-1.500 0-2.700 0.600-3.500 1.900Z"/></svg><span class="t" style="left:1157px;top:41.00px;font-size:11.5px;line-height:17px;color:#fff;font-weight:500;transform:scaleX(0.8913);transform-origin:left center;">共有</span><svg style="left:1182.500px;top:48px" width="6" height="4" viewBox="0 0 6 4" fill="none" stroke="#fff" stroke-width="1"><path d="M0.500 0.500L3 3L5.500 0.500"/></svg></div></body></html>
